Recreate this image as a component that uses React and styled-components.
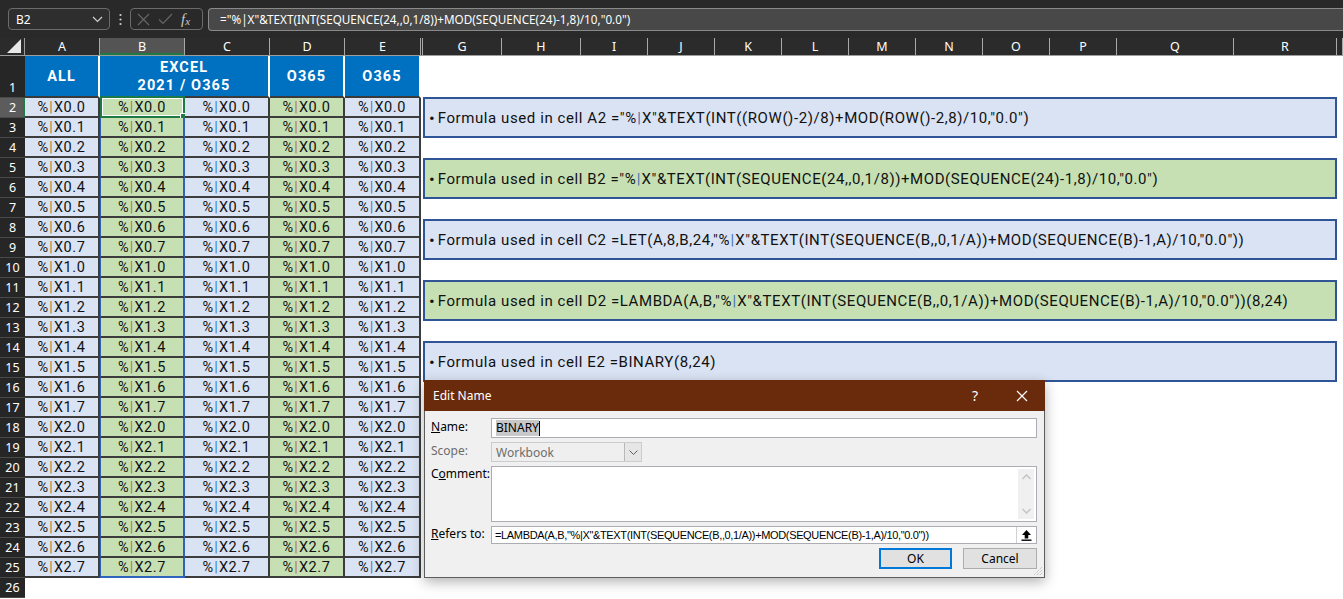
import React from "react";
import styled, { createGlobalStyle } from "styled-components";

const GlobalStyle = createGlobalStyle`
  html, body {
    margin: 0;
    padding: 0;
    background: #ffffff;
    overflow: hidden;
  }
  body {
    width: 1343px;
    height: 599px;
    font-family: "Noto Sans", "Open Sans", sans-serif;
  }
  * {
    box-sizing: border-box;
  }
`;

const columns = [
  { id: "A", w: 75 },
  { id: "B", w: 85, active: true },
  { id: "C", w: 85 },
  { id: "D", w: 75 },
  { id: "E", w: 76 },
  { id: "", w: 2 },
  { id: "G", w: 79 },
  { id: "H", w: 79 },
  { id: "I", w: 67 },
  { id: "J", w: 67 },
  { id: "K", w: 67 },
  { id: "L", w: 67 },
  { id: "M", w: 67 },
  { id: "N", w: 67 },
  { id: "O", w: 67 },
  { id: "P", w: 67 },
  { id: "Q", w: 117 },
  { id: "R", w: 103 },
  { id: "", w: 6 },
];

// fill / cleartype tint of the bar per column A..E
const dataCols = [
  { green: false, bar: "#b5793a" },
  { green: true, bar: "#b5793a", spill: true },
  { green: false, bar: "#3f7fd0" },
  { green: true, bar: "#b5793a" },
  { green: false, bar: "#3f7fd0" },
];

const values = Array.from({ length: 24 }, (_, i) => `X${Math.floor(i / 8)}.${i % 8}`);

const notes = [
  { green: false, text: 'Formula used in cell A2 ="%|X"&TEXT(INT((ROW()-2)/8)+MOD(ROW()-2,8)/10,"0.0")' },
  { green: true, text: 'Formula used in cell B2 ="%|X"&TEXT(INT(SEQUENCE(24,,0,1/8))+MOD(SEQUENCE(24)-1,8)/10,"0.0")' },
  { green: false, text: 'Formula used in cell C2 =LET(A,8,B,24,"%|X"&TEXT(INT(SEQUENCE(B,,0,1/A))+MOD(SEQUENCE(B)-1,A)/10,"0.0"))' },
  { green: true, text: 'Formula used in cell D2 =LAMBDA(A,B,"%|X"&TEXT(INT(SEQUENCE(B,,0,1/A))+MOD(SEQUENCE(B)-1,A)/10,"0.0"))(8,24)' },
  { green: false, text: "Formula used in cell E2 =BINARY(8,24)" },
];

const withBar = (text, color) => {
  const parts = text.split("|");
  return parts.map((p, i) => (
    <React.Fragment key={i}>
      {p}
      {i < parts.length - 1 && <Bar $color={color}>|</Bar>}
    </React.Fragment>
  ));
};

const App = () => {
  return (
    <Page>
      <GlobalStyle />
      <Toolbar>
        <NameBox>
          <span>B2</span>
          <svg width="11" height="7" viewBox="0 0 11 7">
            <path d="M1 1l4.5 4.5L10 1" fill="none" stroke="#d0d0d0" strokeWidth="1.2" />
          </svg>
        </NameBox>
        <Dots>
          <svg width="3" height="13" viewBox="0 0 3 13">
            <circle cx="1.5" cy="2" r="1.1" fill="#cfcfcf" />
            <circle cx="1.5" cy="6.5" r="1.1" fill="#cfcfcf" />
            <circle cx="1.5" cy="11" r="1.1" fill="#cfcfcf" />
          </svg>
        </Dots>
        <FxGroup>
          <svg width="13" height="13" viewBox="0 0 13 13">
            <path d="M1 1l11 11M12 1L1 12" stroke="#686868" strokeWidth="1.1" />
          </svg>
          <svg width="15" height="12" viewBox="0 0 15 12">
            <path d="M1 6.5l4 4L14 1" fill="none" stroke="#686868" strokeWidth="1.1" />
          </svg>
          <FxText>
            f<sub>x</sub>
          </FxText>
        </FxGroup>
        <FormulaInput>="%|X"&amp;TEXT(INT(SEQUENCE(24,,0,1/8))+MOD(SEQUENCE(24)-1,8)/10,"0.0")</FormulaInput>
      </Toolbar>

      <HeaderRow>
        <Corner>
          <svg width="14" height="14" viewBox="0 0 14 14">
            <path d="M14 0V14H0Z" fill="#e8e8e8" />
          </svg>
        </Corner>
        {columns.map((c, i) => (
          <ColHead key={i} $w={c.w} $active={c.active}>
            {c.id}
          </ColHead>
        ))}
      </HeaderRow>

      <Body>
        <Grid>
          <RowHead $tall>1</RowHead>
          <TitleCell>ALL</TitleCell>
          <TitleCell $span={2}>
            EXCEL
            <br />
            2021 / O365
          </TitleCell>
          <TitleCell>O365</TitleCell>
          <TitleCell>O365</TitleCell>

          {values.map((v, r) => (
            <React.Fragment key={v}>
              <RowHead $active={r === 0}>{r + 2}</RowHead>
              {dataCols.map((c, ci) => (
                <Cell
                  key={ci}
                  $green={c.green}
                  $spill={c.spill}
                  $last={r === values.length - 1}
                  $selected={r === 0 && ci === 1}
                >
                  %<Bar $color={c.bar}>|</Bar>
                  {v}
                </Cell>
              ))}
            </React.Fragment>
          ))}
          <RowHead>26</RowHead>
        </Grid>
        <HiddenCol />
        <Notes>
          {notes.map((n, i) => (
            <NoteBox key={i} $green={n.green}>
              <Bullet>•</Bullet>
              <span>{withBar(n.text, "#3f6fb0")}</span>
            </NoteBox>
          ))}
        </Notes>
      </Body>

      <Dialog>
        <TitleBar>
          <span>Edit Name</span>
          <TitleButtons>
            <span>?</span>
            <svg width="12" height="12" viewBox="0 0 12 12">
              <path d="M1 1l10 10M11 1L1 11" stroke="#ffffff" strokeWidth="1.2" />
            </svg>
          </TitleButtons>
        </TitleBar>
        <Form>
          <Label>
            <u>N</u>ame:
          </Label>
          <TextBox>
            <Selected>BINARY</Selected>
            <Caret />
          </TextBox>

          <Label $disabled>Scope:</Label>
          <Select>
            <span>Workbook</span>
            <SelectArrow>
              <svg width="9" height="5" viewBox="0 0 9 5">
                <path d="M0.5 0.5l4 4 4-4" fill="none" stroke="#606060" strokeWidth="1" />
              </svg>
            </SelectArrow>
          </Select>

          <Label $top>
            C<u>o</u>mment:
          </Label>
          <TextArea>
            <ScrollBar>
              <svg width="9" height="6" viewBox="0 0 9 6">
                <path d="M0.5 5l4-4 4 4" fill="none" stroke="#c2c2c2" strokeWidth="1.3" />
              </svg>
              <svg width="9" height="6" viewBox="0 0 9 6">
                <path d="M0.5 1l4 4 4-4" fill="none" stroke="#c2c2c2" strokeWidth="1.3" />
              </svg>
            </ScrollBar>
          </TextArea>

          <Label>
            <u>R</u>efers to:
          </Label>
          <RefBox>
            <RefText>=LAMBDA(A,B,"%|X"&amp;TEXT(INT(SEQUENCE(B,,0,1/A))+MOD(SEQUENCE(B)-1,A)/10,"0.0"))</RefText>
            <CollapseButton>
              <svg width="11" height="12" viewBox="0 0 11 12">
                <path d="M5.5 1L1 6h2.7v3.5h3.6V6H10Z" fill="#000" />
                <rect x="0.5" y="10.5" width="10" height="1.4" fill="#000" />
              </svg>
            </CollapseButton>
          </RefBox>

          <Buttons>
            <Button $primary>OK</Button>
            <Button>Cancel</Button>
          </Buttons>
        </Form>
        <Grip>
          <svg width="10" height="10" viewBox="0 0 10 10">
            <path d="M9 1L1 9M9 4L4 9M9 7L7 9" stroke="#b4b4b4" strokeWidth="1" strokeDasharray="1 1" />
          </svg>
        </Grip>
      </Dialog>
    </Page>
  );
};

export default App;

const Page = styled.div`
  position: relative;
  width: 1343px;
  height: 599px;
  overflow: hidden;
  background: #ffffff;
`;

const Toolbar = styled.div`
  display: flex;
  align-items: center;
  height: 38px;
  padding: 0 0 0 8px;
  background: #292929;
`;

const NameBox = styled.div`
  display: flex;
  align-items: center;
  justify-content: space-between;
  width: 102px;
  height: 22px;
  padding: 0 6px 0 7px;
  border: 1px solid #6b6b6b;
  border-radius: 4px;
  background: #2e2e2e;
  color: #ffffff;
  font-size: 12px;
`;

const Dots = styled.div`
  display: flex;
  align-items: center;
  justify-content: center;
  width: 20px;
`;

const FxGroup = styled.div`
  display: flex;
  align-items: center;
  gap: 8px;
  width: 73px;
  height: 22px;
  padding: 0 0 0 6px;
  border: 1px solid #6b6b6b;
  border-radius: 4px;
`;

const FxText = styled.span`
  color: #c8c8c8;
  font-family: "Liberation Serif", serif;
  font-style: italic;
  font-size: 15px;
  line-height: 1;

  sub {
    font-size: 11px;
    vertical-align: -1px;
  }
`;

const FormulaInput = styled.div`
  flex: 1;
  height: 23px;
  margin-left: 5px;
  padding: 0 0 0 11px;
  display: flex;
  align-items: center;
  border: 1px solid #8a8a8a;
  border-right: none;
  border-radius: 4px 0 0 4px;
  background: #484848;
  color: #ffffff;
  font-size: 11.7px;
  white-space: nowrap;
`;

const HeaderRow = styled.div`
  display: flex;
  height: 18px;
  background: #2b2b2b;
  border-bottom: 1px solid #9d9d9d;
`;

const Corner = styled.div`
  display: flex;
  align-items: flex-end;
  justify-content: flex-end;
  width: 25px;
  padding: 0 3px 2px 0;
  border-right: 1px solid #9d9d9d;
`;

const ColHead = styled.div`
  display: flex;
  align-items: center;
  justify-content: center;
  width: ${(p) => p.$w}px;
  flex: 0 0 ${(p) => p.$w}px;
  border-right: 1px solid #a8a8a8;
  background: ${(p) => (p.$active ? "#545454" : "transparent")};
  box-shadow: ${(p) => (p.$active ? "inset 0 -2px 0 #1e7a45" : "none")};
  color: #ffffff;
  font-size: 12.5px;
`;

const Body = styled.div`
  display: flex;
  align-items: flex-start;
`;

const Grid = styled.div`
  display: grid;
  grid-template-columns: 25px 75px 85px 85px 75px 76px;
  grid-template-rows: 42px;
  grid-auto-rows: 20px;
  width: 421px;
  flex: 0 0 421px;
`;

const RowHead = styled.div`
  grid-column: 1;
  display: flex;
  align-items: ${(p) => (p.$tall ? "flex-end" : "center")};
  justify-content: center;
  padding-bottom: ${(p) => (p.$tall ? "1px" : "0")};
  background: ${(p) => (p.$active ? "#5c5c5c" : "#262626")};
  border-bottom: 1px solid #4a4a4a;
  box-shadow: ${(p) => (p.$active ? "inset -2px 0 0 #1e7a45" : "none")};
  color: #ffffff;
  font-size: 12.5px;
`;

const TitleCell = styled.div`
  grid-column: span ${(p) => p.$span || 1};
  display: flex;
  align-items: center;
  justify-content: center;
  padding-top: 2px;
  text-align: center;
  background: #0070c0;
  border-right: 2px solid #ffffff;
  border-bottom: 2px solid #3a3a3a;
  color: #ffffff;
  font-family: "Roboto", "Liberation Sans", sans-serif;
  font-weight: 700;
  font-size: 14.5px;
  letter-spacing: 1.1px;
  line-height: 18px;
`;

const Cell = styled.div`
  position: relative;
  display: flex;
  align-items: center;
  justify-content: center;
  background: ${(p) => (p.$green ? "#c6e0b4" : "#dae3f3")};
  border-right: 2px solid ${(p) => (p.$spill ? "#2f63bd" : "#3c3c3c")};
  border-bottom: 2px solid ${(p) => (p.$spill && p.$last ? "#2f63bd" : "#3c3c3c")};
  border-left: ${(p) => (p.$spill ? "1px solid #2f63bd" : "none")};
  color: #111111;
  font-family: "Roboto", "Liberation Sans", sans-serif;
  font-size: 14.5px;
  letter-spacing: 0.6px;

  ${(p) =>
    p.$selected &&
    `
    &::before {
      content: "";
      position: absolute;
      inset: -2px -2px -2px -1px;
      border: 2px solid #1e7a45;
      box-shadow: inset 0 0 0 1px #ffffff;
    }
    &::after {
      content: "";
      position: absolute;
      right: -5px;
      bottom: -5px;
      width: 6px;
      height: 6px;
      background: #1e7a45;
      border: 1px solid #ffffff;
    }
  `}
`;

const Bar = styled.span`
  color: ${(p) => p.$color};
  margin: 0 0.5px;
`;

const HiddenCol = styled.div`
  width: 2px;
  flex: 0 0 2px;
`;

const Notes = styled.div`
  display: flex;
  flex-direction: column;
  gap: 20px;
  width: 914px;
  padding-top: 41px;
`;

const NoteBox = styled.div`
  display: flex;
  align-items: center;
  gap: 3px;
  height: 41px;
  padding-left: 4px;
  background: ${(p) => (p.$green ? "#c6e0b4" : "#dae3f3")};
  border: 2px solid #2f5597;
  color: #111111;
  font-family: "Roboto", "Liberation Sans", sans-serif;
  font-size: 15px;
  letter-spacing: 0.58px;
  white-space: nowrap;
`;

const Bullet = styled.span`
  font-size: 17px;
  letter-spacing: 0;
`;

const Dialog = styled.div`
  position: absolute;
  left: 424px;
  top: 380px;
  width: 621px;
  height: 198px;
  display: flex;
  flex-direction: column;
  background: #f0f0f0;
  border: 1px solid #5d5d5d;
  border-top: none;
  box-shadow: 0 4px 12px rgba(0, 0, 0, 0.3);
  font-family: "Noto Sans", "Open Sans", sans-serif;
  font-size: 12px;
`;

const TitleBar = styled.div`
  display: flex;
  align-items: center;
  justify-content: space-between;
  height: 31px;
  margin: 0 -1px;
  padding: 0 17px 0 9px;
  background: #6a2a0c;
  color: #ffffff;
  font-size: 12px;
`;

const TitleButtons = styled.div`
  display: flex;
  align-items: center;
  gap: 38px;
  font-size: 14px;
`;

const Form = styled.div`
  display: grid;
  grid-template-columns: 60px 546px;
  grid-template-rows: 20px 20px 56px 18px 21px;
  row-gap: 4px;
  padding: 7px 0 0 6px;
`;

const Label = styled.div`
  display: flex;
  align-items: ${(p) => (p.$top ? "flex-start" : "center")};
  color: ${(p) => (p.$disabled ? "#6d6d6d" : "#000000")};
  padding-top: ${(p) => (p.$top ? "2px" : "0")};
  margin-top: -3px;
`;

const TextBox = styled.div`
  display: flex;
  align-items: center;
  padding-left: 4px;
  background: #ffffff;
  border: 1px solid #abadb3;
`;

const Selected = styled.span`
  background: #c8c8c8;
  color: #000000;
  line-height: 16px;
`;

const Caret = styled.span`
  width: 1px;
  height: 15px;
  background: #000000;
`;

const Select = styled.div`
  display: flex;
  align-items: center;
  justify-content: space-between;
  width: 151px;
  padding-left: 4px;
  background: #efefef;
  border: 1px solid #cccccc;
  color: #6d6d6d;
`;

const SelectArrow = styled.div`
  display: flex;
  align-items: center;
  justify-content: center;
  width: 17px;
  height: 100%;
  background: #e6e6e6;
  border-left: 1px solid #b9b9b9;
`;

const TextArea = styled.div`
  display: flex;
  justify-content: flex-end;
  padding: 2px;
  background: #ffffff;
  border: 1px solid #abadb3;
`;

const ScrollBar = styled.div`
  display: flex;
  flex-direction: column;
  align-items: center;
  justify-content: space-between;
  width: 16px;
  padding: 5px 0;
  background: #f0f0f0;
`;

const RefBox = styled.div`
  display: flex;
  align-items: center;
  justify-content: space-between;
  padding: 0 0 0 3px;
  background: #ffffff;
  border: 1px solid #abadb3;
`;

const RefText = styled.span`
  font-family: "Liberation Sans", "Noto Sans", sans-serif;
  font-size: 11px;
  letter-spacing: -0.35px;
  white-space: nowrap;
`;

const CollapseButton = styled.div`
  display: flex;
  align-items: center;
  justify-content: center;
  width: 20px;
  height: 100%;
  border-left: 1px solid #d0d0d0;
`;

const Buttons = styled.div`
  grid-column: 1 / span 2;
  display: flex;
  justify-content: flex-end;
  gap: 11px;
`;

const Button = styled.div`
  display: flex;
  align-items: center;
  justify-content: center;
  width: ${(p) => (p.$primary ? "73px" : "74px")};
  background: #e1e1e1;
  border: ${(p) => (p.$primary ? "2px solid #0078d7" : "1px solid #adadad")};
  color: #000000;
  font-size: 12px;
`;

const Grip = styled.div`
  position: absolute;
  right: 1px;
  bottom: 1px;
  width: 10px;
  height: 10px;
  display: flex;
`;
